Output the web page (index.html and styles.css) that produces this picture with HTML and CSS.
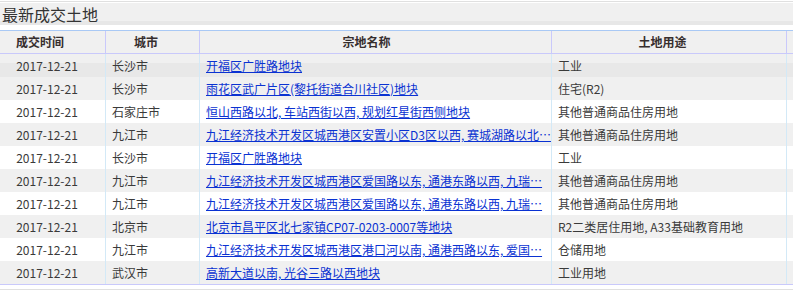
FILE: index.html
```html
<!DOCTYPE html>
<html lang="zh-CN">
<head>
<meta charset="utf-8">
<title>最新成交土地</title>
<link rel="stylesheet" href="styles.css">
</head>
<body>
<div class="panel">
  <div class="panel-title">最新成交土地</div>
  <table class="deals">
    <colgroup>
      <col class="c-date">
      <col class="c-city">
      <col class="c-name">
      <col class="c-use">
      <col class="c-rest">
    </colgroup>
    <thead>
      <tr>
        <th class="h-date">成交时间</th>
        <th class="h-city">城市</th>
        <th class="h-name">宗地名称</th>
        <th class="h-use">土地用途</th>
        <th class="h-rest"></th>
      </tr>
    </thead>
    <tbody>
      <tr class="first">
        <td class="date">2017-12-21</td><td class="city">长沙市</td>
        <td class="name"><a href="#">开福区广胜路地块</a></td><td class="use">工业</td><td class="rest"></td>
      </tr>
      <tr class="odd">
        <td class="date">2017-12-21</td><td class="city">长沙市</td>
        <td class="name"><a href="#">雨花区武广片区(黎托街道合川社区)地块</a></td><td class="use">住宅(R2)</td><td class="rest"></td>
      </tr>
      <tr>
        <td class="date">2017-12-21</td><td class="city">石家庄市</td>
        <td class="name"><a href="#">恒山西路以北, 车站西街以西, 规划红星街西侧地块</a></td><td class="use">其他普通商品住房用地</td><td class="rest"></td>
      </tr>
      <tr class="odd">
        <td class="date">2017-12-21</td><td class="city">九江市</td>
        <td class="name"><a href="#" title="九江经济技术开发区城西港区安置小区D3区以西, 赛城湖路以北地块">九江经济技术开发区城西港区安置小区D3区以西, 赛城湖路以北…</a></td><td class="use">其他普通商品住房用地</td><td class="rest"></td>
      </tr>
      <tr>
        <td class="date">2017-12-21</td><td class="city">长沙市</td>
        <td class="name"><a href="#">开福区广胜路地块</a></td><td class="use">工业</td><td class="rest"></td>
      </tr>
      <tr class="odd">
        <td class="date">2017-12-21</td><td class="city">九江市</td>
        <td class="name"><a href="#">九江经济技术开发区城西港区爱国路以东, 通港东路以西, 九瑞…</a></td><td class="use">其他普通商品住房用地</td><td class="rest"></td>
      </tr>
      <tr>
        <td class="date">2017-12-21</td><td class="city">九江市</td>
        <td class="name"><a href="#">九江经济技术开发区城西港区爱国路以东, 通港东路以西, 九瑞…</a></td><td class="use">其他普通商品住房用地</td><td class="rest"></td>
      </tr>
      <tr class="odd">
        <td class="date">2017-12-21</td><td class="city">北京市</td>
        <td class="name"><a href="#">北京市昌平区北七家镇CP07-0203-0007等地块</a></td><td class="use">R2二类居住用地, A33基础教育用地</td><td class="rest"></td>
      </tr>
      <tr>
        <td class="date">2017-12-21</td><td class="city">九江市</td>
        <td class="name"><a href="#">九江经济技术开发区城西港区港口河以南, 通港西路以东, 爱国…</a></td><td class="use">仓储用地</td><td class="rest"></td>
      </tr>
      <tr class="odd">
        <td class="date">2017-12-21</td><td class="city">武汉市</td>
        <td class="name"><a href="#">高新大道以南, 光谷三路以西地块</a></td><td class="use">工业用地</td><td class="rest"></td>
      </tr>
    </tbody>
  </table>
  <div class="panel-foot"></div>
</div>
</body>
</html>
```

FILE: styles.css
```css
html, body {
  margin: 0;
  padding: 0;
  background: #ffffff;
}

body {
  font-family: "Noto Sans CJK SC", "Noto Sans", sans-serif;
  color: #333333;
  overflow: hidden;
}

.panel {
  margin-top: 1px;
  border-top: 1px solid #e0e0e0;
  padding-top: 1px;
  width: 793px;
  overflow: hidden;
}

.panel-title {
  height: 22px;
  line-height: 23px;
  padding-left: 2px;
  font-size: 16px;
  color: #333333;
  background: linear-gradient(#f0f0f0 0, #f0f0f0 18px, #e7e7e7 18px, #e7e7e7 22px);
  white-space: nowrap;
}

.deals {
  margin-top: 5px;
  width: 800px;
  table-layout: fixed;
  border-collapse: separate;
  border-spacing: 0;
  border-top: 1px solid #a9c9f5;
  border-bottom: 1px solid #c9c9fb;
  font-size: 12px;
}

.c-date { width: 106px; }
.c-city { width: 94px; }
.c-name { width: 352px; }
.c-use  { width: 235px; }
.c-rest { width: 13px; }

.deals th {
  box-sizing: border-box;
  height: 23px;
  padding: 0;
  background: #f0f0f0;
  border-right: 1px solid #c9c9fb;
  border-bottom: 1px solid #c9c9fb;
  font-weight: bold;
  font-size: 12px;
  color: #362e2e;
  text-align: center;
  line-height: 22px;
  white-space: nowrap;
}

.h-date { padding-right: 25px !important; }
.h-city { padding-right: 13px !important; }
.h-name { padding-right: 18px !important; }
.h-use  { padding-right: 13px !important; }

.deals td {
  box-sizing: border-box;
  height: 23px;
  padding: 0 0 0 6px;
  line-height: 23px;
  border-right: 1px solid #d3e9f7;
  white-space: nowrap;
  overflow: hidden;
  color: #3a3a3a;
}

.deals tr.odd td {
  background: #f0f0f0;
}

.deals tr.first td {
  background: linear-gradient(#f0f0f0 0, #f0f0f0 9px, #e8e8e8 9px, #e8e8e8 23px);
}

.deals td.date {
  padding: 0 11px 0 0;
  text-align: center;
}

.deals td.name {
  padding-right: 4px;
}

.deals td.name a {
  color: #0a32d2;
  text-decoration: underline;
}

.deals td.rest {
  padding: 0;
  border-right: none;
}

.deals th.h-rest {
  border-right: none;
}

.panel-foot {
  margin-top: 4px;
  border-top: 1px solid #e0e0e0;
  height: 4px;
}
```
